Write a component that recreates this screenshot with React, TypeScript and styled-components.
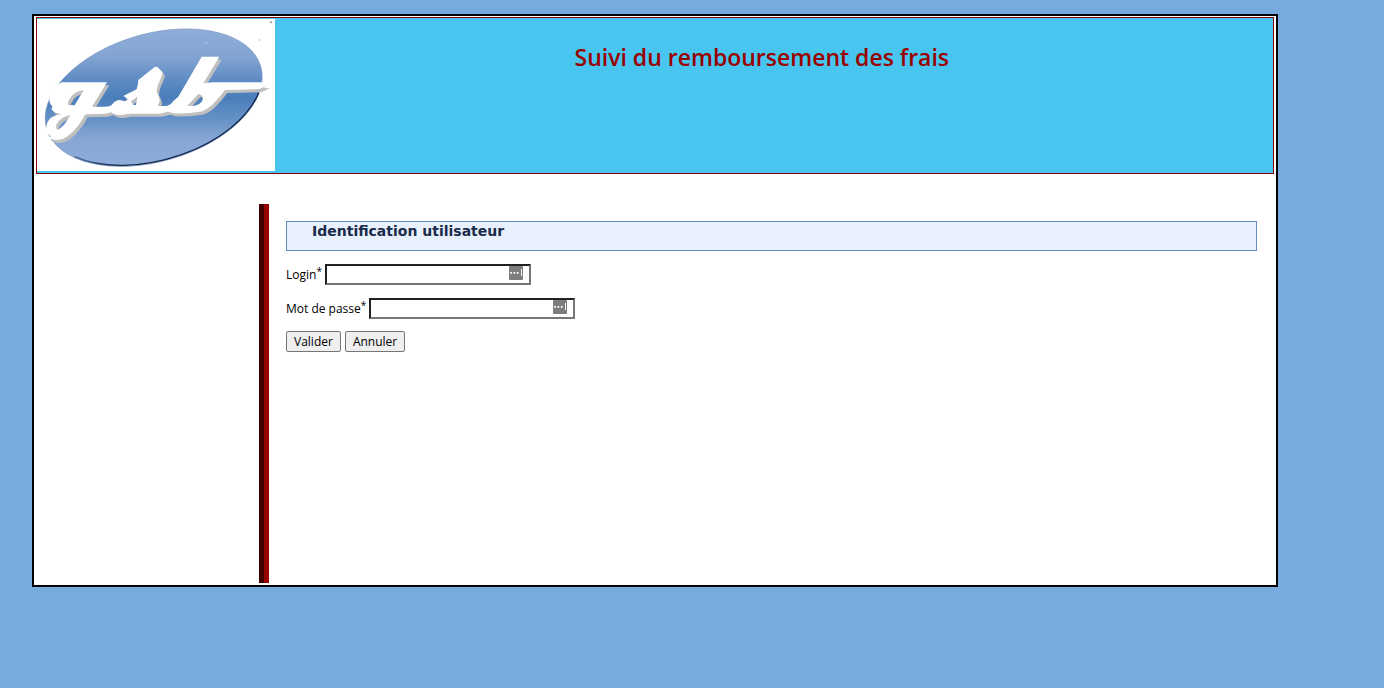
import React from "react";
import styled, { createGlobalStyle } from "styled-components";

const GlobalStyle = createGlobalStyle`
  body {
    margin: 0;
    background: #77aadd;
    color: #000;
    font: 12px/17px "Trebuchet MS", "Open Sans", sans-serif;
  }
`;

const Page = styled.div`
  box-sizing: border-box;
  width: 90%;
  margin: 14px 0 0 32px;
  padding: 1px 2px 2px;
  border: 2px solid #000;
  background: #fff;
`;

const Header = styled.header`
  display: flex;
  align-items: flex-start;
  padding: 1px 0 2px;
  border: 1px solid #8b0000;
  background: #48c6ef;
`;

const Logo = styled.svg`
  flex: none;
  width: 238px;
  height: 152px;
  background: #fff;
`;

const Title = styled.h1`
  flex: 1;
  margin: 24px 24px 0 0;
  color: #900;
  font-size: 23px;
  line-height: 28px;
  font-weight: 600;
  text-align: center;
`;

const Columns = styled.div`
  display: flex;
  margin-top: 30px;
`;

const Side = styled.nav`
  box-sizing: border-box;
  flex: none;
  width: 228px;
  border-right: 5px solid #400000;
`;

const Content = styled.main`
  flex: 1;
  min-height: 362px;
  padding: 17px 17px 0;
  border-left: 5px solid #900;
`;

const Heading = styled.h2`
  box-sizing: border-box;
  height: 30px;
  margin: 0 0 13px;
  padding-left: 25px;
  border: 1px solid #6688bb;
  background: #e8f0fe;
  color: #1a2a4a;
  font: bold 14px/18px Verdana, "DejaVu Sans", sans-serif;
`;

const Row = styled.div`
  display: flex;
  align-items: center;
  gap: 3px;
  margin-bottom: 13px;
`;

const Required = styled.span`
  font-size: 10px;
  line-height: 1;
  vertical-align: text-top;
`;

const Actions = styled.div`
  display: flex;
  gap: 4px;
  margin-top: -1px;
`;

const Field = styled.div`
  position: relative;
  display: flex;
`;

const Input = styled.input`
  box-sizing: border-box;
  width: 206px;
  height: 21px;
  padding: 1px 24px 1px 2px;
  border: 2px inset #767676;
  background: #fff;
  font: inherit;
`;

const Badge = styled.svg`
  position: absolute;
  top: 2px;
  right: 8px;
  width: 14px;
  height: 14px;
`;

const Button = styled.button`
  height: 21px;
  padding: 0 7px;
  border: 1px solid #767676;
  border-radius: 2px;
  background: #efefef;
  color: #000;
  font: inherit;
`;

const KeyBadge = () => (
  <Badge viewBox="0 0 14 14" aria-hidden="true">
    <rect width="14" height="14" rx="1" fill="#7d7d7d" />
    <path d="M1.2 6h1.8v1.8H1.2zM4.5 6h1.8v1.8H4.5zM7.8 6h1.8v1.8H7.8zM12 3h1v7h-1z" fill="#fff" />
  </Badge>
);

/* The script lettering is drawn as one shape, used again for its shadow. */
const lettering =
  "M102 223H237L192 296H232Q246 296 251 291Q262 276 276 276L291 280L301 274L286 264L326 244Q330 232 331 216L376 180Q386 173 391 180L403 191Q405 197 398 212Q386 236 386 252Q394 266 395 279L389 294H417Q430 290 437 278L451 266L521 146H574L526 226Q545 223 561 223H701L703 231L718 232L695 243Q640 245 591 246Q575 268 561 281Q540 306 516 311Q478 318 436 316L420 311L396 317H300Q285 322 271 321Q256 320 249 313L232 317L172 319Q162 338 152 351Q138 372 117 386Q103 396 87 396Q72 396 62 390L70 385Q54 376 54 361Q56 342 67 331Q80 321 102 319Q78 316 70 303Q76 296 70 292Q64 285 64 276Q67 258 77 246Q85 229 102 223ZM120 291Q119 284 122 278Q128 264 140 256Q152 248 167 246L140 292ZM87 366Q83 358 85 350Q91 338 102 331Q113 323 127 321L112 346Q100 362 87 366ZM309 280L328 266L324 291H315ZM478 294L511 258Q521 260 524 266Q525 276 521 281Q514 291 501 293Z";

const GsbLogo = () => (
  <Logo viewBox="27 33 714 456" preserveAspectRatio="none" role="img" aria-label="gsb">
    <defs>
      <linearGradient id="oval" x1="0" y1="0" x2="0" y2="1">
        <stop offset="0" stopColor="#8fadd8" />
        <stop offset=".2" stopColor="#83a4d2" />
        <stop offset=".38" stopColor="#5c8ac3" />
        <stop offset=".5" stopColor="#4a7ebb" />
        <stop offset=".65" stopColor="#6490c6" />
        <stop offset=".8" stopColor="#86a6d4" />
        <stop offset="1" stopColor="#8fadd8" />
      </linearGradient>
      <linearGradient id="edge" x1="0" y1="0" x2="1" y2="0">
        <stop offset="0" stopColor="#47669a" />
        <stop offset=".25" stopColor="#16294d" />
        <stop offset="1" stopColor="#16294d" />
      </linearGradient>
    </defs>
    <path
      d="M56 363A334 191 -16.3 0 1 698 175A334 191 -16.3 0 1 56 363Z"
      fill="url(#oval)"
      stroke="#6f8fbe"
      strokeWidth="2"
    />
    <path
      d="M140 446A334 191 -16.3 0 0 692 254"
      fill="none"
      stroke="url(#edge)"
      strokeWidth="4"
    />
    <path d={lettering} fill="#bfbfbf" fillRule="evenodd" transform="translate(7 9)" />
    <path d={lettering} fill="#fff" fillRule="evenodd" />
    <circle cx="729" cy="43" r="3" fill="#8a8f96" />
    <circle cx="694" cy="96" r="2" fill="#9aa5b5" />
    <circle cx="535" cy="104" r="3" fill="#b0c7e6" />
  </Logo>
);

export default function App() {
  return (
    <>
      <GlobalStyle />
      <Page>
        <Header>
          <GsbLogo />
          <Title>Suivi du remboursement des frais</Title>
        </Header>
        <Columns>
          <Side />
          <Content>
            <Heading>Identification utilisateur</Heading>
            <form onSubmit={(e) => e.preventDefault()}>
              <Row>
                <label htmlFor="login">
                  Login<Required>*</Required>
                </label>
                <Field>
                  <Input id="login" type="text" />
                  <KeyBadge />
                </Field>
              </Row>
              <Row>
                <label htmlFor="mdp">
                  Mot de passe<Required>*</Required>
                </label>
                <Field>
                  <Input id="mdp" type="password" />
                  <KeyBadge />
                </Field>
              </Row>
              <Actions>
                <Button type="submit">Valider</Button>
                <Button type="reset">Annuler</Button>
              </Actions>
            </form>
          </Content>
        </Columns>
      </Page>
    </>
  );
}
